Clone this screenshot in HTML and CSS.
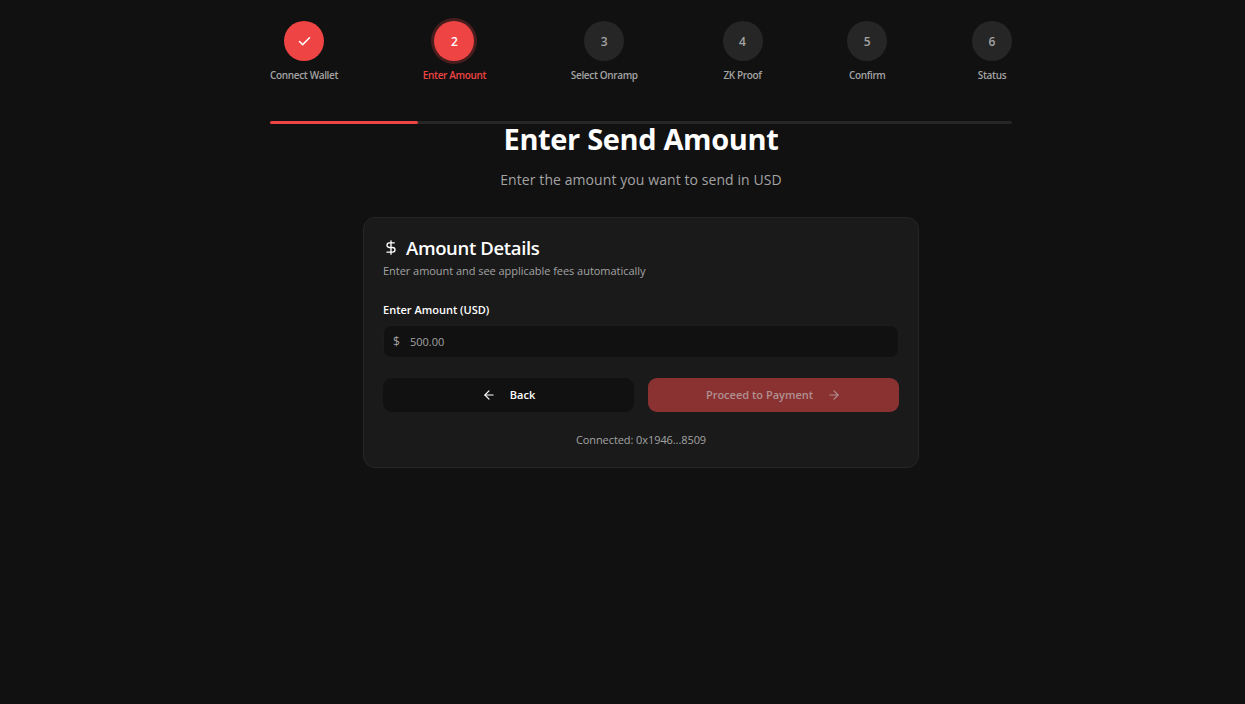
FILE: index.html
```html
<!DOCTYPE html>
<html lang="en">
<head>
<meta charset="utf-8">
<title>Enter Send Amount</title>
<link rel="stylesheet" href="styles.css">
</head>
<body>
<main class="page">
  <div class="wizard">
    <ol class="steps">
      <li class="step done">
        <span class="dot"><svg width="15" height="15" viewBox="0 0 24 24" fill="none" stroke="currentColor" stroke-width="2.4" stroke-linecap="round" stroke-linejoin="round"><path d="M20 6 9 17l-5-5"/></svg></span>
        <span class="label">Connect Wallet</span>
      </li>
      <li class="step active"><span class="dot">2</span><span class="label">Enter Amount</span></li>
      <li class="step"><span class="dot">3</span><span class="label">Select Onramp</span></li>
      <li class="step"><span class="dot">4</span><span class="label">ZK Proof</span></li>
      <li class="step"><span class="dot">5</span><span class="label">Confirm</span></li>
      <li class="step"><span class="dot">6</span><span class="label">Status</span></li>
    </ol>
    <div class="progress"><div class="progress-fill"></div></div>
  </div>
  <h1 class="title">Enter Send Amount</h1>
  <p class="subtitle">Enter the amount you want to send in USD</p>
  <section class="card">
    <h2 class="card-title">
      <svg class="dollar" width="16" height="17" viewBox="0 0 24 24" fill="none" stroke="currentColor" stroke-width="2" stroke-linecap="round" stroke-linejoin="round"><path d="M12 2v20"/><path d="M17 5H9.5a3.5 3.5 0 0 0 0 7h5a3.5 3.5 0 0 1 0 7H6"/></svg>
      <span class="card-title-text">Amount Details</span>
    </h2>
    <p class="card-sub">Enter amount and see applicable fees automatically</p>
    <div class="field-label">Enter Amount (USD)</div>
    <div class="input"><span class="cur">$</span><span class="val">500.00</span></div>
    <div class="actions">
      <button class="btn back" type="button">
        <svg width="14" height="14" viewBox="0 0 24 24" fill="none" stroke="currentColor" stroke-width="2" stroke-linecap="round" stroke-linejoin="round"><path d="m12 19-7-7 7-7"/><path d="M19 12H5"/></svg>
        Back
      </button>
      <button class="btn next" type="button">
        Proceed to Payment
        <svg width="14" height="14" viewBox="0 0 24 24" fill="none" stroke="currentColor" stroke-width="2" stroke-linecap="round" stroke-linejoin="round"><path d="M5 12h14"/><path d="m12 5 7 7-7 7"/></svg>
      </button>
    </div>
    <p class="connected">Connected: 0x1946...8509</p>
  </section>
</main>
</body>
</html>
```
FILE: styles.css
```css
* { box-sizing: border-box; }
html, body { margin: 0; height: 100%; }
body {
  background: #111111;
  color: #fff;
  font-family: "Open Sans", "Noto Sans", "Liberation Sans", sans-serif;
  overflow: hidden;
}
.page {
  display: flex;
  flex-direction: column;
  align-items: center;
  padding: 21px 0 0 37px;
}
.wizard { width: 742px; }
.steps {
  display: flex;
  justify-content: space-between;
  list-style: none;
  margin: 0;
  padding: 0;
}
.step {
  display: flex;
  flex-direction: column;
  align-items: center;
  color: #a3a3a3;
}
.dot {
  width: 40px;
  height: 40px;
  border-radius: 50%;
  background: #262626;
  display: flex;
  align-items: center;
  justify-content: center;
  font-size: 12px;
  font-weight: 600;
}
.label {
  margin-top: 7px;
  font-size: 10px;
  letter-spacing: -0.35px;
  line-height: 14px;
  font-weight: 600;
  white-space: nowrap;
}
.done .dot, .active .dot { background: #ef4444; color: #fff; }
.active .dot { box-shadow: 0 0 0 3px rgba(239, 68, 68, 0.25); }
.active .label { color: #ef4444; }
.progress {
  margin-top: 39px;
  height: 3px;
  background: #262626;
  border-radius: 2px;
}
.progress-fill {
  width: 20%;
  height: 100%;
  background: #ef4444;
  border-radius: 2px;
}
.title {
  margin: 0;
  font-size: 29px;
  letter-spacing: -0.35px;
  line-height: 30px;
  font-weight: 700;
  text-align: center;
}
.subtitle {
  margin: 16px 0 0;
  font-size: 14px;
  letter-spacing: 0.08px;
  line-height: 20px;
  color: #a3a3a3;
  text-align: center;
}
.card {
  margin-top: 27px;
  width: 556px;
  height: 251px;
  padding: 18px 19px;
  background: #1a1a1a;
  border: 1px solid #262626;
  border-radius: 12px;
}
.card-title {
  display: flex;
  align-items: center;
  gap: 7px;
  margin: 0;
  font-size: 18.5px;
  letter-spacing: -0.35px;
  line-height: 24px;
  font-weight: 600;
}
.dollar { margin-top: -2px; }
.card-sub {
  margin: 3px 0 0;
  font-size: 11px;
  letter-spacing: -0.04px;
  line-height: 15px;
  color: #a3a3a3;
}
.field-label {
  margin-top: 24px;
  font-size: 11px;
  line-height: 15px;
  font-weight: 600;
}
.input {
  margin-top: 8px;
  height: 33px;
  background: #111111;
  border: 1px solid #1c1c1c;
  border-radius: 8px;
  display: flex;
  align-items: center;
  padding: 0 9px;
  font-size: 11px;
  color: #a3a3a3;
}
.cur { font-size: 12px; }
.val { margin-left: 10px; }
.actions {
  display: grid;
  grid-template-columns: 1fr 1fr;
  gap: 14px;
  margin-top: 20px;
}
.btn {
  height: 34px;
  border: 0;
  border-radius: 9px;
  padding: 0 0 1px;
  display: flex;
  align-items: center;
  justify-content: center;
  gap: 14px;
  font-family: inherit;
  font-size: 11px;
  font-weight: 600;
}
.back { background: #111111; color: #fff; }
.next { background: #8a3232; color: #b09090; }
.connected {
  margin: 20px 0 0;
  font-size: 11px;
  letter-spacing: -0.08px;
  line-height: 15px;
  color: #a3a3a3;
  text-align: center;
}
```
